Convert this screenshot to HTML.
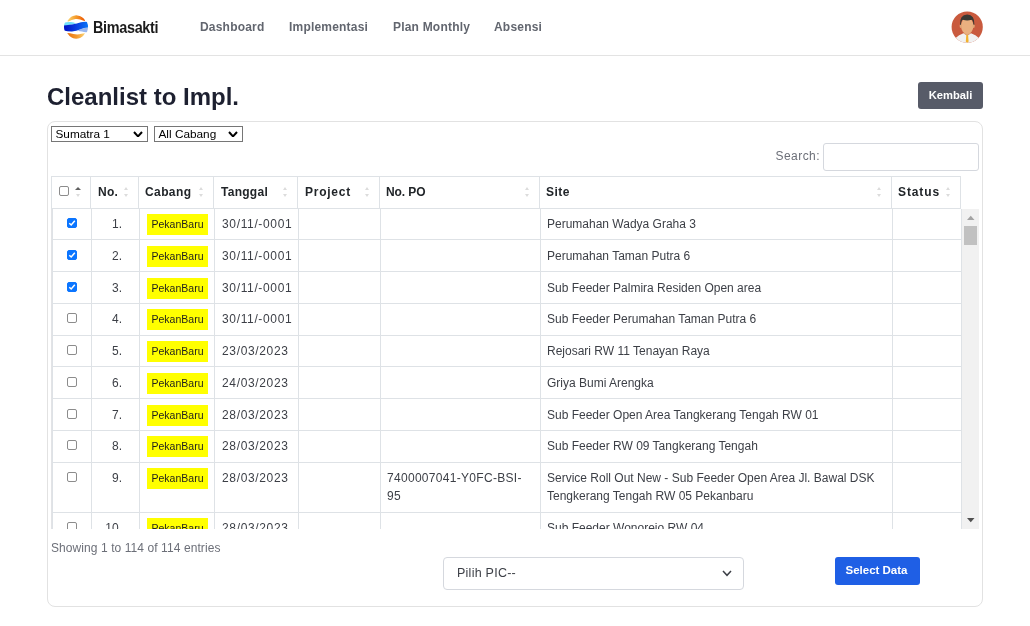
<!DOCTYPE html>
<html><head><meta charset="utf-8">
<style>
*{box-sizing:border-box;margin:0;padding:0}
html,body{width:1030px;height:626px;overflow:hidden;background:#fff;will-change:transform;font-family:"Liberation Sans",sans-serif;color:#212529}
.a{position:absolute;white-space:nowrap}
.nav{position:absolute;left:0;top:0;width:1030px;height:56px;border-bottom:1px solid #e3e3e3;background:#fff}
.nl{position:absolute;top:20px;font-size:12px;font-weight:bold;color:#62666f;line-height:14px;letter-spacing:.2px}
.card{position:absolute;left:47px;top:121px;width:936px;height:486px;border:1px solid #e2e2e2;border-radius:8px}
.sel{position:absolute;top:126px;height:16px;border:1px solid #767676;font-size:11.8px;line-height:14px;color:#000;padding-left:3.5px}
.chev{position:absolute}
.hd{position:absolute;left:51px;top:176px;width:910px;height:33px;border:1px solid #dee2e6}
.hv{position:absolute;top:176px;width:1px;height:33px;background:#dee2e6}
.ht{position:absolute;top:186px;font-size:12px;font-weight:bold;line-height:12px;color:#212529}
.bv{position:absolute;top:0;width:1px;height:320px;background:#dee2e6}
.bh{position:absolute;left:0;width:910px;height:1px;background:#dee2e6}
.tx{position:absolute;font-size:12px;line-height:18px;color:#3c3f46;white-space:nowrap}
.nm{position:absolute;font-size:12px;line-height:18px;color:#3c3f46;text-align:right;width:30px}
.bd{position:absolute;left:147px;width:61px;height:21px;background:#ffff00;font-size:10.5px;line-height:21px;color:#1e1e1e;text-align:center}
.cb{position:absolute;left:67px;width:10px;height:10px;border:1px solid #8c8c8c;border-radius:2px;background:#fff}
.cb.on{background:#0b75ff;border-color:#0b75ff}
.dg{letter-spacing:.65px}
.st{letter-spacing:0}
.sa{position:absolute;width:0;height:0;border-left:3px solid transparent;border-right:3px solid transparent}
</style></head><body>
<div class="nav"></div>
<!-- logo -->
<svg class="a" style="left:63.8px;top:14.9px" width="24" height="24" viewBox="0 0 24 24">
  <defs>
    <linearGradient id="og1" x1="0" y1="0" x2="1" y2="0"><stop offset="0" stop-color="#fcd877"/><stop offset="0.45" stop-color="#f5a030"/><stop offset="1" stop-color="#ec5400"/></linearGradient>
    <linearGradient id="og2" x1="0" y1="0" x2="1" y2="0"><stop offset="0" stop-color="#e8700e"/><stop offset="0.55" stop-color="#f29a30"/><stop offset="1" stop-color="#fcd67a"/></linearGradient>
    <linearGradient id="bg1" x1="0" y1="0" x2="1" y2="0"><stop offset="0" stop-color="#0010c4"/><stop offset="0.5" stop-color="#0a3ee0"/><stop offset="1" stop-color="#0a74f6"/></linearGradient>
    <clipPath id="lc"><circle cx="12" cy="12" r="12"/></clipPath>
  </defs>
  <g clip-path="url(#lc)">
    <path d="M3.2 6.2 Q7 0 12.5 0.2 Q18 0.4 21.2 5.6 Q20.5 6.3 19 5.6 Q15.5 3.6 11.5 4 Q7.5 4.6 4.5 6.4Z" fill="url(#og1)"/>
    <path d="M3.2 18 Q7 24 12.5 23.8 Q18 23.6 21 18.2 Q19.5 18 17.5 18.8 Q13.5 20 9.5 19 Q6 18 3.2 18Z" fill="url(#og2)"/>
    <path d="M0 7.8 Q3 6.6 7 7 Q10 7.4 12 8.6 L1.5 11 L0 11Z" fill="#72e0fa"/>
    <path d="M19 13.5 Q22 12.6 24 12.5 L24 17 Q21 17.5 18 16.6 Q15 15.8 13 16.2 Q16 14 19 13.5Z" fill="#98b6ef"/>
    <path d="M0 10.5 Q4 9.8 8 9.4 Q13 8.6 17 7.2 Q20.5 6.3 24 7 L24 12.6 Q20 12.6 16.5 14.2 Q12.5 16.2 8 16.4 Q3.5 16.5 0 15.5Z" fill="url(#bg1)"/>
  </g>
</svg>
<div class="a" style="left:93px;top:19px;font-size:16px;font-weight:bold;letter-spacing:-0.35px;transform:scaleX(0.9);transform-origin:0 0;color:#1b1b1b;line-height:17px">Bimasakti</div>
<div class="nl" style="left:200px">Dashboard</div>
<div class="nl" style="left:289px">Implementasi</div>
<div class="nl" style="left:393px">Plan Monthly</div>
<div class="nl" style="left:494px">Absensi</div>
<!-- avatar -->
<svg class="a" style="left:951px;top:11px" width="32" height="32" viewBox="0 0 32 32">
  <defs><clipPath id="cc"><circle cx="16.2" cy="16.1" r="15.6"/></clipPath></defs>
  <g clip-path="url(#cc)">
    <rect x="0" y="0" width="32" height="32" fill="#c95a3e"/>
    <path d="M4 27.5 Q8 23.5 12.5 22.3 L16.2 24.5 L20 22.3 Q24.5 23.5 28.5 27.5 L28.5 33 L4 33Z" fill="#f1f1f1"/>
    <path d="M13 19 L19.4 19 L19.4 22.8 L16.2 24.8 L13 22.8Z" fill="#e0a474"/>
    <path d="M15.3 24 L17.1 24 L17.6 30.5 L16.2 32 L14.8 30.5Z" fill="#f2b22e"/>
    <ellipse cx="16.2" cy="15" rx="6.2" ry="8" fill="#eab080"/>
    <ellipse cx="9.8" cy="15" rx="1.2" ry="2" fill="#e2a676"/>
    <ellipse cx="22.6" cy="15" rx="1.2" ry="2" fill="#e2a676"/>
    <path d="M9 14 Q8.5 3.4 16.2 3.4 Q23.9 3.4 23.4 14 L22.4 13.5 Q22.3 9.5 20.5 8.8 Q16.2 10 11.9 8.8 Q10.1 9.5 10 13.5Z" fill="#3a3833"/>
  </g>
</svg>

<div class="a" style="left:47px;top:83px;font-size:24px;font-weight:bold;line-height:28px;color:#1d2030">Cleanlist to Impl.</div>
<div class="a" style="left:918px;top:82px;width:65px;height:27px;background:#575b68;border-radius:3px;color:#fff;font-size:11.2px;font-weight:bold;line-height:27px;text-align:center">Kembali</div>

<div class="card"></div>
<div class="sel" style="left:51px;width:97px">Sumatra 1</div>
<div class="sel" style="left:154px;width:89px">All Cabang</div>
<svg class="chev" style="left:133px;top:130.8px" width="10" height="6.6" viewBox="0 0 10 6.6"><path d="M1 1 L5 5.4 L9 1" stroke="#000" stroke-width="2" fill="none"/></svg>
<svg class="chev" style="left:228px;top:130.8px" width="10" height="6.6" viewBox="0 0 10 6.6"><path d="M1 1 L5 5.4 L9 1" stroke="#000" stroke-width="2" fill="none"/></svg>

<div class="a" style="left:775.5px;top:150px;font-size:12px;line-height:12px;color:#6c6f78;letter-spacing:.45px">Search:</div>
<div class="a" style="left:823px;top:143px;width:156px;height:28px;border:1px solid #d5d8de;border-radius:3px"></div>

<!-- header -->
<div class="hd"></div>
<div class="hv" style="left:90px"></div>
<div class="hv" style="left:138px"></div>
<div class="hv" style="left:213px"></div>
<div class="hv" style="left:297px"></div>
<div class="hv" style="left:379px"></div>
<div class="hv" style="left:539px"></div>
<div class="hv" style="left:891px"></div>
<div class="cb" style="left:59px;top:186px"></div>
<div class="ht" style="left:98px;letter-spacing:0.3px">No.</div>
<div class="ht" style="left:145px;letter-spacing:0.4px">Cabang</div>
<div class="ht" style="left:221px;letter-spacing:0.27px">Tanggal</div>
<div class="ht" style="left:305px;letter-spacing:0.75px">Project</div>
<div class="ht" style="left:386px;letter-spacing:-0.1px">No. PO</div>
<div class="ht" style="left:546px;letter-spacing:0.5px">Site</div>
<div class="ht" style="left:898px;letter-spacing:0.9px">Status</div>

<div class="sa" style="left:75px;top:186.5px;border-left-width:3px;border-right-width:3px;border-bottom:3.5px solid #606060"></div>
<div class="sa" style="left:75.5px;top:194px;border-left-width:2.5px;border-right-width:2.5px;border-top:3px solid #dcdcdc"></div>
<div class="sa" style="left:123.5px;top:187px;border-left-width:2.5px;border-right-width:2.5px;border-bottom:3px solid #dcdcdc"></div>
<div class="sa" style="left:123.5px;top:194px;border-left-width:2.5px;border-right-width:2.5px;border-top:3px solid #dcdcdc"></div>
<div class="sa" style="left:198.5px;top:187px;border-left-width:2.5px;border-right-width:2.5px;border-bottom:3px solid #dcdcdc"></div>
<div class="sa" style="left:198.5px;top:194px;border-left-width:2.5px;border-right-width:2.5px;border-top:3px solid #dcdcdc"></div>
<div class="sa" style="left:282.5px;top:187px;border-left-width:2.5px;border-right-width:2.5px;border-bottom:3px solid #dcdcdc"></div>
<div class="sa" style="left:282.5px;top:194px;border-left-width:2.5px;border-right-width:2.5px;border-top:3px solid #dcdcdc"></div>
<div class="sa" style="left:364.5px;top:187px;border-left-width:2.5px;border-right-width:2.5px;border-bottom:3px solid #dcdcdc"></div>
<div class="sa" style="left:364.5px;top:194px;border-left-width:2.5px;border-right-width:2.5px;border-top:3px solid #dcdcdc"></div>
<div class="sa" style="left:524.5px;top:187px;border-left-width:2.5px;border-right-width:2.5px;border-bottom:3px solid #dcdcdc"></div>
<div class="sa" style="left:524.5px;top:194px;border-left-width:2.5px;border-right-width:2.5px;border-top:3px solid #dcdcdc"></div>
<div class="sa" style="left:876.5px;top:187px;border-left-width:2.5px;border-right-width:2.5px;border-bottom:3px solid #dcdcdc"></div>
<div class="sa" style="left:876.5px;top:194px;border-left-width:2.5px;border-right-width:2.5px;border-top:3px solid #dcdcdc"></div>
<div class="sa" style="left:945.5px;top:187px;border-left-width:2.5px;border-right-width:2.5px;border-bottom:3px solid #dcdcdc"></div>
<div class="sa" style="left:945.5px;top:194px;border-left-width:2.5px;border-right-width:2.5px;border-top:3px solid #dcdcdc"></div>
<!-- body -->
<div class="a" style="left:51px;top:209px;width:1px;height:320px;background:#e2e3e6"></div>
<div class="a" style="left:52px;top:209px;width:910px;height:320px;overflow:hidden">
<div class="bv" style="left:0px"></div>
<div class="bv" style="left:39px"></div>
<div class="bv" style="left:87px"></div>
<div class="bv" style="left:162px"></div>
<div class="bv" style="left:246px"></div>
<div class="bv" style="left:328px"></div>
<div class="bv" style="left:488px"></div>
<div class="bv" style="left:840px"></div>
<div class="cb on" style="left:15px;top:9px"><svg width=8 height=8 viewBox="0 0 8 8" style="position:absolute;left:0;top:0"><path d="M1.3 4.2 L3.2 6 L6.8 1.8" stroke="#fff" stroke-width="1.5" fill="none"/></svg></div>
<div class="nm" style="left:40px;top:6px">1.</div>
<div class="bd" style="left:95px;top:5px">PekanBaru</div>
<div class="tx dg" style="left:170px;top:6px">30/11/-0001</div>
<div class="tx st" style="left:495px;top:6px">Perumahan Wadya Graha 3</div>
<div class="bh" style="top:30px"></div>
<div class="cb on" style="left:15px;top:41px"><svg width=8 height=8 viewBox="0 0 8 8" style="position:absolute;left:0;top:0"><path d="M1.3 4.2 L3.2 6 L6.8 1.8" stroke="#fff" stroke-width="1.5" fill="none"/></svg></div>
<div class="nm" style="left:40px;top:38px">2.</div>
<div class="bd" style="left:95px;top:37px">PekanBaru</div>
<div class="tx dg" style="left:170px;top:38px">30/11/-0001</div>
<div class="tx st" style="left:495px;top:38px">Perumahan Taman Putra 6</div>
<div class="bh" style="top:62px"></div>
<div class="cb on" style="left:15px;top:73px"><svg width=8 height=8 viewBox="0 0 8 8" style="position:absolute;left:0;top:0"><path d="M1.3 4.2 L3.2 6 L6.8 1.8" stroke="#fff" stroke-width="1.5" fill="none"/></svg></div>
<div class="nm" style="left:40px;top:70px">3.</div>
<div class="bd" style="left:95px;top:69px">PekanBaru</div>
<div class="tx dg" style="left:170px;top:70px">30/11/-0001</div>
<div class="tx st" style="left:495px;top:70px">Sub Feeder Palmira Residen Open area</div>
<div class="bh" style="top:94px"></div>
<div class="cb" style="left:15px;top:104px"></div>
<div class="nm" style="left:40px;top:101px">4.</div>
<div class="bd" style="left:95px;top:100px">PekanBaru</div>
<div class="tx dg" style="left:170px;top:101px">30/11/-0001</div>
<div class="tx st" style="left:495px;top:101px">Sub Feeder Perumahan Taman Putra 6</div>
<div class="bh" style="top:126px"></div>
<div class="cb" style="left:15px;top:136px"></div>
<div class="nm" style="left:40px;top:133px">5.</div>
<div class="bd" style="left:95px;top:132px">PekanBaru</div>
<div class="tx dg" style="left:170px;top:133px">23/03/2023</div>
<div class="tx st" style="left:495px;top:133px">Rejosari RW 11 Tenayan Raya</div>
<div class="bh" style="top:157px"></div>
<div class="cb" style="left:15px;top:168px"></div>
<div class="nm" style="left:40px;top:165px">6.</div>
<div class="bd" style="left:95px;top:164px">PekanBaru</div>
<div class="tx dg" style="left:170px;top:165px">24/03/2023</div>
<div class="tx st" style="left:495px;top:165px">Griya Bumi Arengka</div>
<div class="bh" style="top:189px"></div>
<div class="cb" style="left:15px;top:200px"></div>
<div class="nm" style="left:40px;top:197px">7.</div>
<div class="bd" style="left:95px;top:196px">PekanBaru</div>
<div class="tx dg" style="left:170px;top:197px">28/03/2023</div>
<div class="tx st" style="left:495px;top:197px">Sub Feeder Open Area Tangkerang Tengah RW 01</div>
<div class="bh" style="top:221px"></div>
<div class="cb" style="left:15px;top:231px"></div>
<div class="nm" style="left:40px;top:228px">8.</div>
<div class="bd" style="left:95px;top:227px">PekanBaru</div>
<div class="tx dg" style="left:170px;top:228px">28/03/2023</div>
<div class="tx st" style="left:495px;top:228px">Sub Feeder RW 09 Tangkerang Tengah</div>
<div class="bh" style="top:253px"></div>
<div class="cb" style="left:15px;top:263px"></div>
<div class="nm" style="left:40px;top:260px">9.</div>
<div class="bd" style="left:95px;top:259px">PekanBaru</div>
<div class="tx dg" style="left:170px;top:260px">28/03/2023</div>
<div class="tx" style="left:335px;top:260px;letter-spacing:.3px">7400007041-Y0FC-BSI-<br>95</div>
<div class="tx st" style="left:495px;top:260px">Service Roll Out New - Sub Feeder Open Area Jl. Bawal DSK<br>Tengkerang Tengah RW 05 Pekanbaru</div>
<div class="bh" style="top:303px"></div>
<div class="cb" style="left:15px;top:313px"></div>
<div class="nm" style="left:40px;top:310px">10.</div>
<div class="bd" style="left:95px;top:309px">PekanBaru</div>
<div class="tx dg" style="left:170px;top:310px">28/03/2023</div>
<div class="tx st" style="left:495px;top:310px">Sub Feeder Wonorejo RW 04</div>
<div class="bv" style="left:909px"></div>
</div>
<div class="a" style="left:962px;top:209px;width:17px;height:320px;background:#f1f1f1"></div>
<svg class="a" style="left:962px;top:209px" width="17" height="320"><path d="M5 11 L12.5 11 L8.75 6.8Z" fill="#a3a3a3"/><path d="M5 309 L12.5 309 L8.75 313.3Z" fill="#505050"/></svg>
<div class="a" style="left:964px;top:226px;width:13px;height:19px;background:#c1c1c1"></div>
<!-- /body -->

<div class="a" style="left:51px;top:542px;font-size:12px;line-height:12px;color:#6c6f78;letter-spacing:.08px">Showing 1 to 114 of 114 entries</div>
<div class="a" style="left:443px;top:557px;width:301px;height:33px;border:1px solid #d5d8de;border-radius:4px"></div>
<div class="a" style="left:457px;top:566px;font-size:12.5px;line-height:14px;color:#3c3f46;letter-spacing:.25px">Pilih PIC--</div>
<svg class="chev" style="left:721.5px;top:570px" width="10" height="6.5" viewBox="0 0 10 6.5"><path d="M1 1 L5 5.3 L9 1" stroke="#3c3f46" stroke-width="1.5" fill="none"/></svg>
<div class="a" style="left:835px;top:557px;width:85px;height:28px;background:#1f5fe5;border-radius:3px;color:#fff;font-size:11.5px;font-weight:bold;line-height:26px;text-align:center;padding-right:2px">Select Data</div>
</body></html>
